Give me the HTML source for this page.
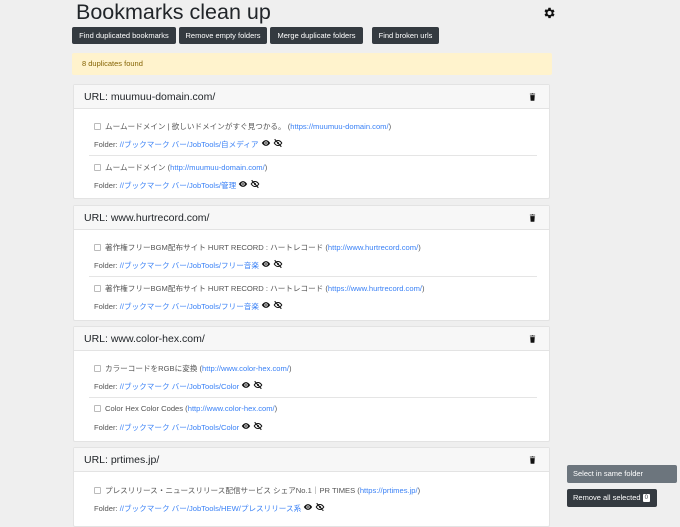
<!DOCTYPE html>
<html><head><meta charset="utf-8"><style>
*{margin:0;padding:0;box-sizing:border-box}
body{width:680px;height:516px;background:#efefef;font-family:"Liberation Sans","Noto Sans CJK JP",sans-serif;position:relative;overflow:hidden;color:#212529}
.a{position:absolute;white-space:nowrap}
h1{position:absolute;left:76px;top:0px;font-size:21.5px;font-weight:400;color:#212529}
.btn{position:absolute;top:27px;height:17px;background:#343a40;color:#fff;font-size:7.5px;line-height:17px;text-align:center;border-radius:2px;white-space:nowrap}
.alert{position:absolute;left:72px;top:53px;width:480px;height:22px;background:#fff3cd;color:#856404;font-size:7.5px;line-height:22px;padding-left:10px;border-radius:2px}
.card{position:absolute;left:73px;width:477px;background:#fff;border:1px solid #e3e3e3;border-radius:2px}
.hd{height:24px;background:#f7f7f7;border-bottom:1px solid #e3e3e3;font-size:10.5px;line-height:24px;padding-left:10px;position:relative}
.tr{position:absolute;right:12px;top:7px}
.t{font-size:7.6px;color:#555}
.f{font-size:7.6px;color:#555}
.l{color:#3b82f6}
.cb{display:inline-block;width:7px;height:7px;border:1px solid #bbb;border-radius:1px;vertical-align:-1px;margin-right:4px;background:#fff}
.div{position:absolute;left:15px;right:12px;height:1px;background:#e5e5e5}
.sb{position:absolute;left:567px;height:18px;color:#fff;font-size:7.5px;line-height:18px;padding-left:6px;border-radius:2px}
</style></head><body>
<h1>Bookmarks clean up</h1>
<svg class="a" style="left:542px;top:6px" width="14" height="14" viewBox="0 0 24 24"><path fill="#111" d="M19.4 13a7.5 7.5 0 000-2l2.1-1.6-2-3.5-2.5 1a7.3 7.3 0 00-1.7-1L14.9 3h-4l-.4 2.6a7.3 7.3 0 00-1.7 1l-2.5-1-2 3.5L6.4 11a7.5 7.5 0 000 2l-2.1 1.6 2 3.5 2.5-1a7.3 7.3 0 001.7 1l.4 2.6h4l.4-2.6a7.3 7.3 0 001.7-1l2.5 1 2-3.5zM12.9 15.5a3.5 3.5 0 110-7 3.5 3.5 0 010 7z"/></svg>
<div class="btn" style="left:72px;width:104px">Find duplicated bookmarks</div>
<div class="btn" style="left:179px;width:88px">Remove empty folders</div>
<div class="btn" style="left:270px;width:93px">Merge duplicate folders</div>
<div class="btn" style="left:372px;width:67px">Find broken urls</div>
<div class="alert">8 duplicates found</div>

<svg width="0" height="0" style="position:absolute"><defs>
<symbol id="eye" viewBox="0 0 24 24"><path fill="#111" d="M12 5C6 5 2 12 2 12s4 7 10 7 10-7 10-7-4-7-10-7zm0 11a4 4 0 110-8 4 4 0 010 8zm0-6a2 2 0 100 4 2 2 0 000-4z"/></symbol>
<symbol id="ne" viewBox="0 0 24 24"><path fill="none" stroke="#111" stroke-width="2.6" d="M3 12s4-6 9-6 9 6 9 6-4 6-9 6-9-6-9-6zM4 3l16 18"/><circle cx="12" cy="12" r="2.5" fill="#111"/></symbol>
<symbol id="tr" viewBox="0 0 24 24"><path fill="#111" d="M6 7h12l-1 15H7zM5 3h5l1-1h2l1 1h5v2H5z"/></symbol>
</defs></svg>

<div class="card" style="top:84px;height:115px">
 <div class="hd">URL: muumuu-domain.com/<svg class="tr" width="9" height="10"><use href="#tr"/></svg></div>
 <div class="a t" style="left:20px;top:36px"><span class="cb"></span>ムームードメイン | 欲しいドメインがすぐ見つかる。 (<span class="l">https://muumuu-domain.com/</span>)</div>
 <div class="a f" style="left:20px;top:53px">Folder: <span class="l">//ブックマーク バー/JobTools/自メディア</span> <svg width="10" height="10" style="vertical-align:-1px"><use href="#eye"/></svg> <svg width="10" height="10" style="vertical-align:-1px"><use href="#ne"/></svg></div>
 <div class="div" style="top:70px"></div>
 <div class="a t" style="left:20px;top:77px"><span class="cb"></span>ムームードメイン (<span class="l">http://muumuu-domain.com/</span>)</div>
 <div class="a f" style="left:20px;top:94px">Folder: <span class="l">//ブックマーク バー/JobTools/管理</span> <svg width="10" height="10" style="vertical-align:-1px"><use href="#eye"/></svg> <svg width="10" height="10" style="vertical-align:-1px"><use href="#ne"/></svg></div>
</div>

<div class="card" style="top:205px;height:116px">
 <div class="hd">URL: www.hurtrecord.com/<svg class="tr" width="9" height="10"><use href="#tr"/></svg></div>
 <div class="a t" style="left:20px;top:36px"><span class="cb"></span>著作権フリーBGM配布サイト HURT RECORD : ハートレコード (<span class="l">http://www.hurtrecord.com/</span>)</div>
 <div class="a f" style="left:20px;top:53px">Folder: <span class="l">//ブックマーク バー/JobTools/フリー音楽</span> <svg width="10" height="10" style="vertical-align:-1px"><use href="#eye"/></svg> <svg width="10" height="10" style="vertical-align:-1px"><use href="#ne"/></svg></div>
 <div class="div" style="top:70px"></div>
 <div class="a t" style="left:20px;top:77px"><span class="cb"></span>著作権フリーBGM配布サイト HURT RECORD : ハートレコード (<span class="l">https://www.hurtrecord.com/</span>)</div>
 <div class="a f" style="left:20px;top:94px">Folder: <span class="l">//ブックマーク バー/JobTools/フリー音楽</span> <svg width="10" height="10" style="vertical-align:-1px"><use href="#eye"/></svg> <svg width="10" height="10" style="vertical-align:-1px"><use href="#ne"/></svg></div>
</div>

<div class="card" style="top:326px;height:116px">
 <div class="hd">URL: www.color-hex.com/<svg class="tr" width="9" height="10"><use href="#tr"/></svg></div>
 <div class="a t" style="left:20px;top:36px"><span class="cb"></span>カラーコードをRGBに変換 (<span class="l">http://www.color-hex.com/</span>)</div>
 <div class="a f" style="left:20px;top:53px">Folder: <span class="l">//ブックマーク バー/JobTools/Color</span> <svg width="10" height="10" style="vertical-align:-1px"><use href="#eye"/></svg> <svg width="10" height="10" style="vertical-align:-1px"><use href="#ne"/></svg></div>
 <div class="div" style="top:70px"></div>
 <div class="a t" style="left:20px;top:77px"><span class="cb"></span>Color Hex Color Codes (<span class="l">http://www.color-hex.com/</span>)</div>
 <div class="a f" style="left:20px;top:94px">Folder: <span class="l">//ブックマーク バー/JobTools/Color</span> <svg width="10" height="10" style="vertical-align:-1px"><use href="#eye"/></svg> <svg width="10" height="10" style="vertical-align:-1px"><use href="#ne"/></svg></div>
</div>

<div class="card" style="top:447px;height:80px">
 <div class="hd">URL: prtimes.jp/<svg class="tr" width="9" height="10"><use href="#tr"/></svg></div>
 <div class="a t" style="left:20px;top:37px"><span class="cb"></span>プレスリリース・ニュースリリース配信サービス シェアNo.1｜PR TIMES (<span class="l">https://prtimes.jp/</span>)</div>
 <div class="a f" style="left:20px;top:54px">Folder: <span class="l">//ブックマーク バー/JobTools/HEW/プレスリリース系</span> <svg width="10" height="10" style="vertical-align:-1px"><use href="#eye"/></svg> <svg width="10" height="10" style="vertical-align:-1px"><use href="#ne"/></svg></div>
</div>

<div class="sb" style="top:465px;width:110px;background:#6c757d">Select in same folder</div>
<div class="sb" style="top:489px;width:90px;background:#343a40">Remove all selected <span style="display:inline-block;background:#fff;color:#343a40;font-size:6px;line-height:8px;padding:0 2px;border-radius:1px;vertical-align:1px">0</span></div>
</body></html>
